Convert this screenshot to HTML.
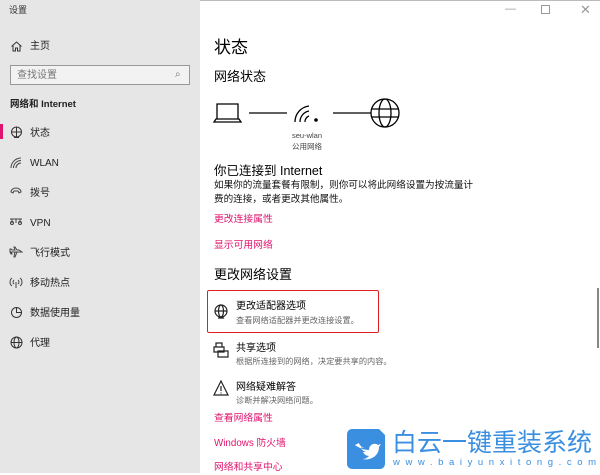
<!DOCTYPE html>
<html><head><meta charset="utf-8"><style>
*{margin:0;padding:0;box-sizing:border-box}
body{width:600px;height:473px;overflow:hidden;background:#fff;font-family:"Liberation Sans","Noto Sans CJK SC",sans-serif;position:relative;color:#000}
.a{position:absolute;white-space:nowrap;line-height:1.45}
div.a:not(.b){padding-top:2px}
#side{position:absolute;left:0;top:0;width:200px;height:473px;background:#e6e6e6}
.nav{font-size:10px;color:#222}
.ic{position:absolute}
.pk{color:#e0146e;font-size:9.8px}
.sub{font-size:8.2px;color:#666}
</style></head><body>
<div style="position:absolute;left:0;top:0;width:600px;height:1px;background:#bbb"></div>
<div id="side"></div>
<div class="a" style="left:9px;top:2px;font-size:9px;color:#333">设置</div>
<div class="a" style="left:505px;top:0px;font-size:11px;color:#999">—</div>
<div class="a b" style="left:541px;top:5px;width:9px;height:9px;border:1px solid #999"></div>
<div class="a" style="left:580px;top:-1px;font-size:13px;color:#999">✕</div>

<svg class="ic" style="left:10px;top:40px" width="13" height="13" viewBox="0 0 13 13"><path d="M1.5 6.5L6.5 2l5 4.5M3 5.5V11h2.5V8h2v3H10V5.5" fill="none" stroke="#333" stroke-width="1"/></svg>
<div class="a nav" style="left:30px;top:38px">主页</div>
<div class="a b" style="left:10px;top:65px;width:180px;height:20px;border:1px solid #999;background:#f2f2f2"></div>
<div class="a" style="left:17px;top:67px;font-size:10px;color:#777">查找设置</div>
<div class="a" style="left:175px;top:66px;font-size:10px;color:#777">⌕</div>
<div class="a" style="left:10px;top:96px;font-size:9.5px;font-weight:bold;color:#222">网络和 Internet</div>
<div class="a b" style="left:0;top:124px;width:3px;height:15px;background:#e0146e"></div>

<svg class="ic" style="left:10px;top:126px" width="13" height="13" viewBox="0 0 13 13"><circle cx="6.5" cy="6" r="5" fill="none" stroke="#333"/><path d="M2 6h9M6.5 1v10M4 11.5h5" stroke="#333" fill="none"/></svg>
<div class="a nav" style="left:30px;top:125px">状态</div>
<svg class="ic" style="left:10px;top:157px" width="12" height="12" viewBox="0 0 12 12"><path d="M1 11a10 10 0 0 1 10-10M3.5 11a7.5 7.5 0 0 1 7.5-7.5M6 11a5 5 0 0 1 5-5" fill="none" stroke="#444"/></svg>
<div class="a nav" style="left:30px;top:155px">WLAN</div>
<svg class="ic" style="left:10px;top:186px" width="12" height="12" viewBox="0 0 12 12"><path d="M1 6a5 4 0 0 1 10 0l-2 1-1-2H4L3 7z" fill="none" stroke="#444"/></svg>
<div class="a nav" style="left:30px;top:185px">拨号</div>
<svg class="ic" style="left:9px;top:216px" width="14" height="10" viewBox="0 0 14 10"><path d="M1 3h12M3 3v4M7 3v4M11 3v4" stroke="#444" fill="none"/><circle cx="3" cy="7" r="1.5" fill="none" stroke="#444"/><circle cx="11" cy="7" r="1.5" fill="none" stroke="#444"/></svg>
<div class="a nav" style="left:30px;top:215px">VPN</div>
<svg class="ic" style="left:9px;top:246px" width="14" height="12" viewBox="0 0 14 12"><path d="M1 6h12l-3-2H8L6 1H5l1 3H3L2 3H1zM1 6l1 2h1l-1-2M6 6l-1 5h1l2-5" fill="none" stroke="#444"/></svg>
<div class="a nav" style="left:30px;top:245px">飞行模式</div>
<svg class="ic" style="left:9px;top:276px" width="14" height="12" viewBox="0 0 14 12"><path d="M3 2a5 5 0 0 0 0 8M11 2a5 5 0 0 1 0 8M5 4a2.5 2.5 0 0 0 0 4M9 4a2.5 2.5 0 0 1 0 4M7 6v6" fill="none" stroke="#444"/></svg>
<div class="a nav" style="left:30px;top:275px">移动热点</div>
<svg class="ic" style="left:10px;top:306px" width="13" height="13" viewBox="0 0 13 13"><circle cx="6.5" cy="6.5" r="5" fill="none" stroke="#333"/><path d="M6.5 1.5v5h5" fill="none" stroke="#333"/></svg>
<div class="a nav" style="left:30px;top:305px">数据使用量</div>
<svg class="ic" style="left:10px;top:336px" width="13" height="13" viewBox="0 0 13 13"><circle cx="6.5" cy="6.5" r="5.5" fill="none" stroke="#333"/><ellipse cx="6.5" cy="6.5" rx="2.5" ry="5.5" fill="none" stroke="#333"/><path d="M1 6.5h11" stroke="#333"/></svg>
<div class="a nav" style="left:30px;top:335px">代理</div>

<div class="a" style="left:214px;top:34px;font-size:17px">状态</div>
<div class="a" style="left:214px;top:66px;font-size:13px">网络状态</div>
<svg class="ic" style="left:212px;top:95px" width="195" height="40" viewBox="0 0 195 40">
<g fill="none" stroke="#000" stroke-width="1.3">
<path d="M5 9h21v15H5zM2 27h27l-2 -3H4z"/>
<path d="M37 18h38M121 18h38"/>
<path d="M83 27a16 16 0 0 1 14-16M88 27a11 11 0 0 1 9-11M93 27a6 6 0 0 1 4-6"/>
<circle cx="173" cy="18" r="14"/><ellipse cx="173" cy="18" rx="6" ry="14"/><path d="M159 14h28M159 22h28"/>
</g><circle cx="104" cy="25" r="1.8"/></svg>
<div class="a" style="left:292px;top:129px;font-size:7.5px;color:#444">seu-wlan</div>
<div class="a" style="left:292px;top:140px;font-size:7.5px;color:#444">公用网络</div>
<div class="a" style="left:214px;top:160px;font-size:12.5px">你已连接到 Internet</div>
<div class="a" style="left:214px;top:177px;font-size:9.6px;line-height:14px;color:#111">如果你的流量套餐有限制，则你可以将此网络设置为按流量计<br>费的连接，或者更改其他属性。</div>
<div class="a pk" style="left:214px;top:211px">更改连接属性</div>
<div class="a pk" style="left:214px;top:237px">显示可用网络</div>
<div class="a" style="left:214px;top:264px;font-size:13px">更改网络设置</div>

<div class="a b" style="left:207px;top:290px;width:172px;height:43px;border:1.5px solid #e02020;border-radius:2px"></div>
<svg class="ic" style="left:213px;top:304px" width="16" height="16" viewBox="0 0 16 16"><g fill="none" stroke="#222" stroke-width="1.2"><circle cx="8" cy="7" r="6"/><ellipse cx="8" cy="7" rx="2.5" ry="6"/><path d="M2 7h12M5 14h6"/></g></svg>
<div class="a" style="left:236px;top:298px;font-size:10px">更改适配器选项</div>
<div class="a sub" style="left:236px;top:313px">查看网络适配器并更改连接设置。</div>
<svg class="ic" style="left:213px;top:342px" width="16" height="16" viewBox="0 0 16 16"><g fill="none" stroke="#222" stroke-width="1.2"><path d="M3 1h6v4H3zM1 5h10v5H1zM5 9h10v6H5z"/></g></svg>
<div class="a" style="left:236px;top:340px;font-size:10px">共享选项</div>
<div class="a sub" style="left:236px;top:354px">根据所连接到的网络，决定要共享的内容。</div>
<svg class="ic" style="left:213px;top:380px" width="16" height="16" viewBox="0 0 16 16"><g fill="none" stroke="#222" stroke-width="1.2"><path d="M8 1L1 15h14z M8 6v5M8 12.5v1"/></g></svg>
<div class="a" style="left:236px;top:379px;font-size:10px">网络疑难解答</div>
<div class="a sub" style="left:236px;top:393px">诊断并解决网络问题。</div>
<div class="a pk" style="left:214px;top:410px">查看网络属性</div>
<div class="a pk" style="left:214px;top:435px">Windows 防火墙</div>
<div class="a pk" style="left:214px;top:459px">网络和共享中心</div>
<div class="a b" style="left:597px;top:288px;width:2px;height:60px;background:#888"></div>

<svg class="ic" style="left:347px;top:429px" width="38" height="40" viewBox="0 0 38 40"><path d="M5 0h27l6 6v29a5 5 0 0 1-5 5H5a5 5 0 0 1-5-5V5a5 5 0 0 1 5-5z" fill="#3b8fe0"/><path d="M8 16c4 3 9 5 14 5 0-5 5-8 9-5l3-1-2 3c0 8-7 14-17 12 3 0 5-1 7-3-3 0-5-2-6-4h3c-3-1-5-3-5-5 1 1 2 1 3 1-3-1-5-4-5-5z" fill="#fff"/></svg>
<div class="a" style="left:392px;top:426px;font-size:25px;color:#3b8fe0;letter-spacing:0px;line-height:30px">白云一键重装系统</div>
<div class="a" style="left:393px;top:454px;font-size:9.5px;color:#3b8fe0;letter-spacing:5.6px">www.baiyunxitong.com</div>
</body></html>
